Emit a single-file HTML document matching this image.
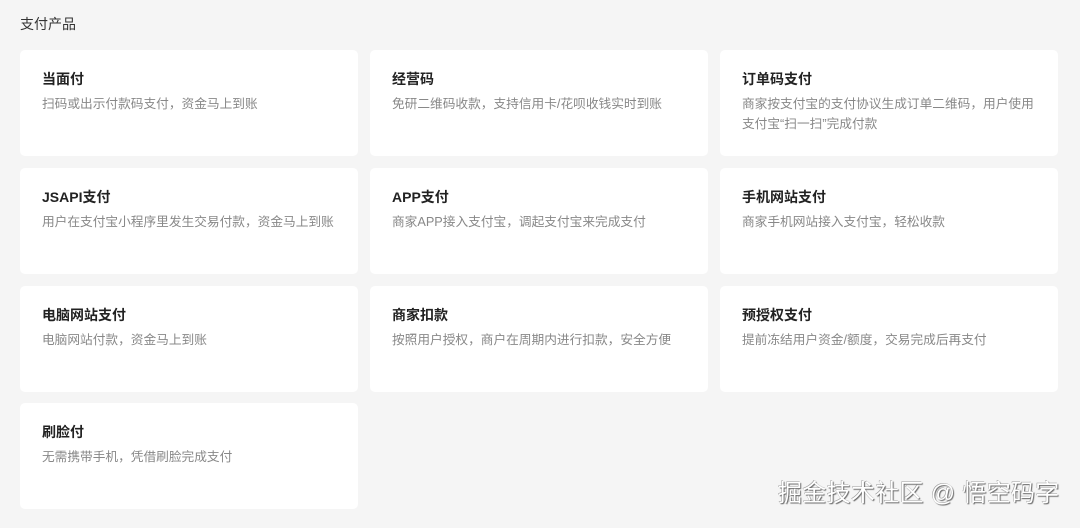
<!DOCTYPE html>
<html><head><meta charset="utf-8"><style>
*{margin:0;padding:0;box-sizing:border-box}
body{width:1080px;height:528px;background:#f5f5f5;font-family:"Liberation Sans","Noto Sans CJK SC",sans-serif;position:relative;overflow:hidden}
.h{position:absolute;left:20px;top:15px;font-size:14px;color:#333;line-height:18px}
.c{position:absolute;width:338px;height:106px;background:#fff;border-radius:5px;padding:20px 22px 0 22px}
.t{font-size:14px;font-weight:bold;color:#222;line-height:18px}
.d{font-size:12.7px;color:#888;line-height:20px;margin-top:6px}
.w{position:absolute;left:778px;top:479px;font-size:24px;color:#fff;line-height:30px;text-shadow:1px 1px 1px #666,-0.5px -0.5px 0 #999;letter-spacing:0.3px;white-space:nowrap}
</style></head><body>
<div class="h">支付产品</div>
<div class="c" style="left:20px;top:50px"><div class="t">当面付</div><div class="d">扫码或出示付款码支付，资金马上到账</div></div>
<div class="c" style="left:370px;top:50px"><div class="t">经营码</div><div class="d">免研二维码收款，支持信用卡/花呗收钱实时到账</div></div>
<div class="c" style="left:720px;top:50px"><div class="t">订单码支付</div><div class="d">商家按支付宝的支付协议生成订单二维码，用户使用支付宝“扫一扫”完成付款</div></div>
<div class="c" style="left:20px;top:168px"><div class="t">JSAPI支付</div><div class="d">用户在支付宝小程序里发生交易付款，资金马上到账</div></div>
<div class="c" style="left:370px;top:168px"><div class="t">APP支付</div><div class="d">商家APP接入支付宝，调起支付宝来完成支付</div></div>
<div class="c" style="left:720px;top:168px"><div class="t">手机网站支付</div><div class="d">商家手机网站接入支付宝，轻松收款</div></div>
<div class="c" style="left:20px;top:286px"><div class="t">电脑网站支付</div><div class="d">电脑网站付款，资金马上到账</div></div>
<div class="c" style="left:370px;top:286px"><div class="t">商家扣款</div><div class="d">按照用户授权，商户在周期内进行扣款，安全方便</div></div>
<div class="c" style="left:720px;top:286px"><div class="t">预授权支付</div><div class="d">提前冻结用户资金/额度，交易完成后再支付</div></div>
<div class="c" style="left:20px;top:403px"><div class="t">刷脸付</div><div class="d">无需携带手机，凭借刷脸完成支付</div></div>
<div class="w">掘金技术社区 @ 悟空码字</div>
</body></html>
